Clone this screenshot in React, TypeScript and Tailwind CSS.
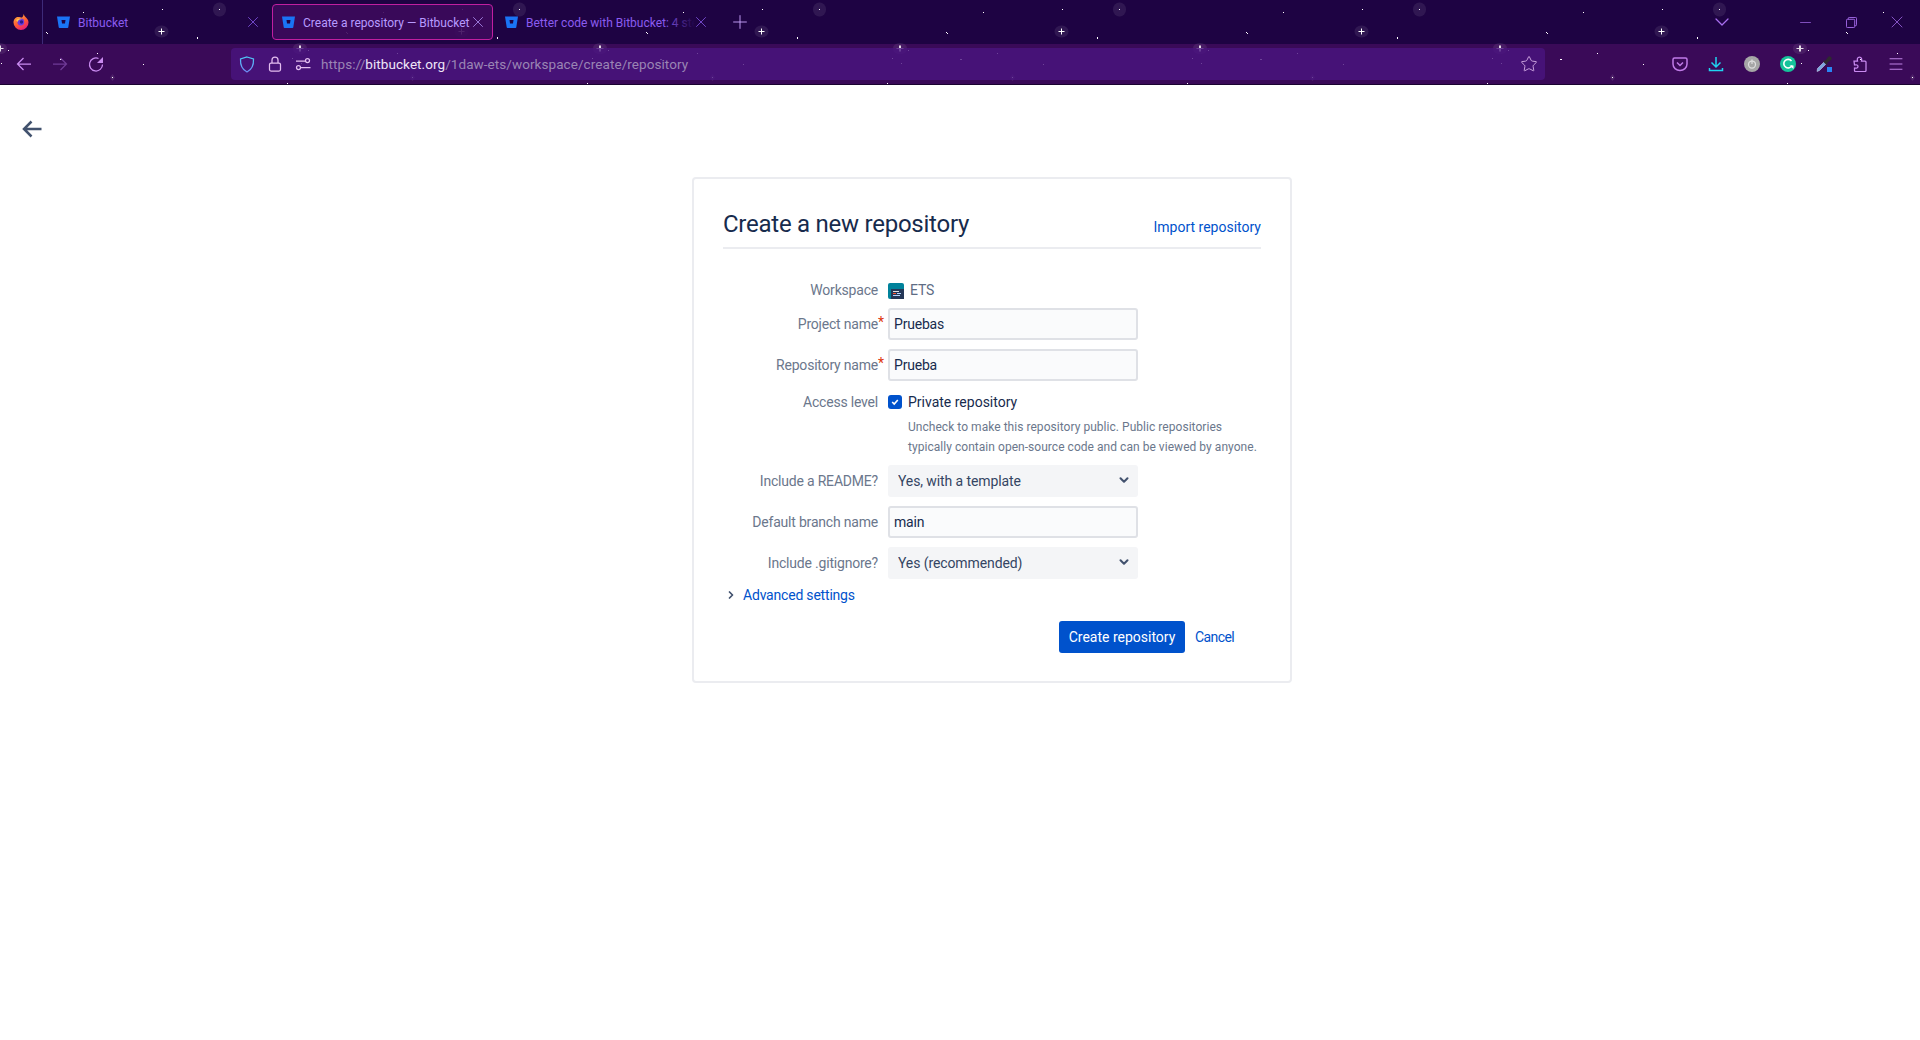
import { ChevronDown, ChevronRight, Menu, Minus, Plus, Star, X } from "lucide-react";

const font = "font-['Roboto','Liberation_Sans',sans-serif]";

function BitbucketIcon() {
  return (
    <svg viewBox="0 0 13 12" className="w-[13px] h-3 shrink-0">
      <path d="M0 0.500h13l-1.700 10.700a.8.8 0 0 1-.8.7H2.500a.8.8 0 0 1-.8-.7z" fill="#1a74f5" />
      <path d="M4.500 4h4l-.5 3.600H5z" fill="#1e0343" />
    </svg>
  );
}

function FirefoxIcon() {
  return (
    <svg viewBox="0 0 16 16" className="w-4 h-4">
      <defs>
        <linearGradient id="ff" x1="0.2" y1="0" x2="0.7" y2="1">
          <stop offset="0" stopColor="#ffb13d" />
          <stop offset="0.55" stopColor="#ff5a35" />
          <stop offset="1" stopColor="#e3187f" />
        </linearGradient>
      </defs>
      <path d="M10.500 0c1 1.500 0.800 2 2 3 1.800 1.500 3 3 3 5.500A7.500 7.500 0 0 1 .5 8.500C.5 5.500 2.500 3 5 3c2 0 3 .5 4 .5 1 -1 1.500-2 1.500-3.500z" fill="url(#ff)" />
      <circle cx="7.800" cy="8" r="3.400" fill="#6a3be0" />
      <circle cx="8.500" cy="8" r="1.700" fill="#2b1a8a" />
      <path d="M3 6c1.500-1.500 4-2 6-1-2 .3-4 1-4.500 3z" fill="#ffc94d" />
    </svg>
  );
}

function Tab({ title, active, fade }: { title: string; active?: boolean; fade?: boolean }) {
  return (
    <div
      className={
        active
          ? "w-[221px] h-9 flex items-center pl-[9px] pr-[5px] rounded border border-[#c01fa0] bg-[#3c0a5c]/90 text-[#b79bff]"
          : "w-[221px] h-9 flex items-center pl-[8px] pr-[6px] border border-transparent text-[#8b5cf0]"
      }
    >
      <BitbucketIcon />
      <div className="relative ml-[8px] mt-[1px] flex-1 overflow-hidden whitespace-nowrap text-[12px] leading-4">
        {title}
        {fade && <div className="absolute right-0 top-0 bottom-0 w-8 bg-gradient-to-r from-transparent to-[#1e0343]" />}
      </div>
      <X size={18} strokeWidth={1} className="shrink-0 -ml-[3px]" />
    </div>
  );
}

function StarField() {
  return (
    <svg className="absolute inset-0 w-full h-full pointer-events-none">
      <defs>
        <pattern id="stars" width="300" height="85" patternUnits="userSpaceOnUse">
          <ellipse cx="161.500" cy="31.500" rx="7" ry="6" fill="#fff" opacity="0.08" />
          <path d="M161.500 28.500v6M158.500 31.500h6" stroke="#fff" strokeWidth="1" />
          <ellipse cx="219.500" cy="9.500" rx="6.500" ry="7" fill="#fff" opacity="0.08" />
          <rect x="219" y="9" width="1" height="1" fill="#fff" />
          <rect x="83" y="12" width="1" height="1" fill="#fff" />
          <rect x="162" y="9" width="1" height="1" fill="#fff" />
          <rect x="46" y="32" width="1" height="1" fill="#fff" />
          <rect x="47" y="33" width="1" height="1" fill="#fff" />
          <rect x="197" y="37" width="1" height="2" fill="#fff" />
          <ellipse cx="0" cy="48.500" rx="7" ry="5.500" fill="#fff" opacity="0.08" />
          <ellipse cx="300" cy="48.500" rx="7" ry="5.500" fill="#fff" opacity="0.08" />
          <path d="M.5 45.500v6M-2.500 48.500h6M299.500 45.500v6M296.500 48.500h6" stroke="#fff" strokeWidth="1" opacity="0.85" />
          <rect x="8" y="50" width="1" height="1" fill="#fff" />
          <rect x="97" y="53" width="1" height="1" fill="#fff" />
          <rect x="292" y="58" width="1" height="1" fill="#fff" />
          <rect x="1" y="63" width="1" height="1" fill="#fff" />
          <rect x="60" y="59" width="2" height="1" fill="#fff" />
          <rect x="143" y="64" width="1" height="1" fill="#fff" />
          <path d="M112.500 74l2.500 3.500-2.500 3.500-2.500-3.500z" fill="#fff" opacity="0.1" />
          <rect x="112" y="77" width="1" height="1" fill="#fff" />
          <rect x="287" y="83" width="1" height="1" fill="#fff" />
        </pattern>
      </defs>
      <rect width="100%" height="100%" fill="url(#stars)" />
    </svg>
  );
}

function BrowserChrome() {
  return (
    <header className={`relative h-[85px] bg-[linear-gradient(#1e0343_0,#1e0343_44px,#3a0a58_44px,#3a0a58_84px,#1a0330_84px)] ${font}`}>
      <StarField />
      <div className="relative h-11 flex items-center">
        <div className="w-[43px] h-11 flex items-center justify-center border-r border-[#3d2a78]">
          <FirefoxIcon />
        </div>
        <div className="ml-[5px] flex gap-[3px]">
          <Tab title="Bitbucket" />
          <Tab title="Create a repository — Bitbucket" active />
          <Tab title="Better code with Bitbucket: 4 steps" fade />
        </div>
        <Plus size={22} strokeWidth={1} className="ml-[12px] text-[#c9a5ff]" />
        <div className="ml-auto flex items-center">
          <ChevronDown size={24} strokeWidth={1.25} className="mr-[48px] text-[#a86ff0]" />
          <div className="w-[46px] flex justify-center"><Minus size={17} strokeWidth={1} className="text-[#a86ff0]" /></div>
          <div className="w-[46px] flex justify-center">
            <svg viewBox="0 0 12 12" className="w-[11px] h-[11px] text-[#a86ff0]" fill="none" stroke="currentColor">
              <rect x="0.500" y="2.500" width="9" height="9" rx="1" />
              <path d="M2.500 2.500v-1a1 1 0 0 1 1-1h7a1 1 0 0 1 1 1v7a1 1 0 0 1-1 1h-1" />
            </svg>
          </div>
          <div className="w-[46px] flex justify-center"><X size={20} strokeWidth={0.9} className="text-[#a86ff0]" /></div>
        </div>
      </div>
      <div className="relative h-10 flex items-center px-[6px]">
        <div className="w-9 flex justify-center">
          <svg viewBox="0 0 16 16" className="w-4 h-4 text-[#c98bf0]" fill="none" stroke="currentColor" strokeWidth="1.25">
            <path d="M15 8H1.500M7.500 2L1.500 8l6 6" />
          </svg>
        </div>
        <div className="w-9 flex justify-center">
          <svg viewBox="0 0 16 16" className="w-4 h-4 text-[#6f3a96]" fill="none" stroke="currentColor" strokeWidth="1.25">
            <path d="M1 8h13.500M8.500 2l6 6-6 6" />
          </svg>
        </div>
        <div className="w-9 flex justify-center">
          <svg viewBox="0 0 16 16" className="w-4 h-4 text-[#c98bf0]" fill="none" stroke="currentColor" strokeWidth="1.25">
            <path d="M14.500 8.500A6.500 6.500 0 1 1 10.500 2.500" />
            <path d="M15 1v6H9z" fill="currentColor" stroke="none" />
          </svg>
        </div>
        <div className="ml-[117px] w-[1314px] h-8 flex items-center rounded bg-[#4a1480]/80 pl-2">
          <svg viewBox="0 0 16 17" className="w-4 h-[17px]" fill="none" strokeWidth="1.25">
            <defs>
              <linearGradient id="shield" x1="0" y1="0" x2="0" y2="1">
                <stop offset="0" stopColor="#4fc8f5" />
                <stop offset="1" stopColor="#6f8cf5" />
              </linearGradient>
            </defs>
            <path d="M8 1l6.500 2c.3 6-1.500 10.500-6.500 13C3 13.500 1.200 9 1.500 3z" stroke="url(#shield)" />
          </svg>
          <svg viewBox="0 0 16 16" className="ml-3 w-4 h-4 text-[#e3bdf0]" fill="none" stroke="currentColor" strokeWidth="1.25">
            <rect x="2.500" y="7" width="11" height="8" rx="1.500" />
            <path d="M5 7V4a3 3 0 0 1 6 0v3" />
          </svg>
          <svg viewBox="0 0 16 16" className="ml-3 w-4 h-4 text-[#e3bdf0]" fill="none" stroke="currentColor" strokeWidth="1.25">
            <path d="M1 5h9M6 11.500h9.500" />
            <circle cx="12.500" cy="4.500" r="2" />
            <circle cx="3.500" cy="11.500" r="2" />
          </svg>
          <div className="ml-[10px] text-[13.5px] leading-5 tracking-[0.07px] text-[#9a85b4] whitespace-nowrap">
            https://<span className="text-[#efe6f8]">bitbucket.org</span>/1daw-ets/workspace/create/repository
          </div>
          <Star size={18} strokeWidth={1.1} className="ml-auto mr-[7px] text-[#e3bdf0]" />
        </div>
        <div className="ml-[117px] flex items-center">
          <div className="w-9 flex justify-center">
            <svg viewBox="0 0 16 16" className="w-4 h-4 text-[#c07be8]" fill="none" stroke="currentColor" strokeWidth="1.5">
              <path d="M2.500 2h11a1.500 1.500 0 0 1 1.500 1.500V8a7 6.500 0 0 1-14 0V3.500A1.500 1.500 0 0 1 2.500 2z" />
              <path d="M5 6.500l3 3 3-3" />
            </svg>
          </div>
          <div className="w-9 flex justify-center">
            <svg viewBox="0 0 16 16" className="w-4 h-4 text-[#1fd4f0]" fill="none" stroke="currentColor" strokeWidth="1.5">
              <path d="M8 1v10M3.500 6.500L8 11l4.500-4.500M1.500 12v2.500h13V12" />
            </svg>
          </div>
          <div className="w-9 flex justify-center">
            <svg viewBox="0 0 16 16" className="w-4 h-4">
              <circle cx="8" cy="8" r="8" fill="#a6a6a6" />
              <circle cx="8" cy="8.500" r="3.500" fill="none" stroke="#dedede" strokeWidth="1.250" />
              <path d="M8 3.500v4.500" stroke="#dedede" strokeWidth="1.250" />
            </svg>
          </div>
          <div className="w-9 flex justify-center">
            <svg viewBox="0 0 16 16" className="w-4 h-4">
              <circle cx="8" cy="8" r="8" fill="#15c39a" />
              <path d="M11.500 5A4.300 4.300 0 1 0 12 9.500" fill="none" stroke="#fff" strokeWidth="1.600" />
              <path d="M9.500 9.500h4v3.500z" fill="#fff" />
            </svg>
          </div>
          <div className="w-9 flex justify-center">
            <svg viewBox="0 0 16 16" className="w-4 h-4">
              <path d="M1 15.500l.5-3L8 6l2 2-6.500 6.500z" fill="#7da7e0" stroke="#d5e3f5" strokeWidth="0.500" />
              <path d="M8 4.500l1.500 0 2.500-3.500a1.500 1.500 0 0 1 3 3l-3.500 2.500 0 1.500-1 1-3.500-3.500z" fill="#2e2a30" />
              <rect x="11" y="11" width="5" height="5" fill="#2a85f5" />
            </svg>
          </div>
          <div className="w-9 flex justify-center">
            <svg viewBox="0 0 16 16" className="w-4 h-4 text-[#c98bf0]" fill="none" stroke="currentColor" strokeWidth="1.25">
              <path d="M2 5h3.500C5 3 5.500 1 7.500 1s2.500 2 2 4h3.500a1 1 0 0 1 1 1v8.500a1 1 0 0 1-1 1H3.500a1 1 0 0 1-1-1V12c2 .5 3.500 0 3.500-1.500S4.500 8.500 2.500 9z" />
            </svg>
          </div>
          <div className="w-9 flex justify-center"><Menu size={18} strokeWidth={1.25} className="text-[#c98bf0]" /></div>
        </div>
      </div>
    </header>
  );
}

function Row({ label, required, children }: { label: string; required?: boolean; children: React.ReactNode }) {
  return (
    <div className="flex items-center">
      <label className="w-[155px] text-right text-[14px] tracking-[-0.2px] text-[#6b778c] whitespace-nowrap relative">
        {label}
        {required && <span className="absolute left-full top-[-2px] text-[#de350b]">*</span>}
      </label>
      <div className="ml-[10px]">{children}</div>
    </div>
  );
}

function TextInput({ value }: { value: string }) {
  return (
    <input
      defaultValue={value}
      className="block w-[250px] h-8 px-1 rounded-[3px] border-2 border-[#dfe1e6] bg-[#fafbfc] text-[14px] tracking-[-0.2px] text-[#172b4d] outline-none"
    />
  );
}

function SelectBox({ value }: { value: string }) {
  return (
    <div className="relative w-[250px] h-8 rounded-[3px] bg-[#f4f5f7]">
      <select
        defaultValue={value}
        className="block w-full h-8 pl-[10px] appearance-none bg-transparent text-[14px] tracking-[-0.1px] text-[#344563] outline-none"
      >
        <option>{value}</option>
      </select>
      <ChevronDown size={14} strokeWidth={3.5} className="absolute right-[7px] top-[8px] text-[#42526e]" />
    </div>
  );
}

export default function App() {
  return (
    <div className="min-h-screen bg-white">
      <BrowserChrome />
      <main className={`flex ${font}`}>
        <aside className="w-16 pt-[34px] pl-[22px]">
          <svg viewBox="0 0 20 20" className="w-5 h-5 text-[#42526e]" fill="none" stroke="currentColor" strokeWidth="2.500">
            <path d="M19.500 10H2M9.500 2.500L2 10l7.500 7.500" />
          </svg>
        </aside>
        <div className="flex-1 flex justify-center pt-[92px]">
          <section className="w-[600px] h-[506px] rounded-[4px] border-2 border-[#ebecf0] px-[29px] pt-[30px]">
            <div className="flex items-end justify-between h-[40px] pb-[7px] border-b-2 border-[#ebecf0]">
              <h1 className="text-[24px] leading-8 tracking-[-0.25px] text-[#172b4d]">Create a new repository</h1>
              <a className="text-[14px] text-[#0052cc] pb-[2px]">Import repository</a>
            </div>
            <div className="mt-[31px] flex flex-col">
              <Row label="Workspace">
                <div className="flex items-center h-5 text-[14px] tracking-[-0.2px] text-[#5e6c84]">
                  <svg viewBox="0 0 16 16" className="w-4 h-4 mr-[6px]">
                    <rect width="16" height="16" rx="2" fill="#00829b" />
                    <rect x="3" y="6" width="13" height="10" fill="#253858" />
                    <rect x="5" y="8" width="6" height="1" fill="#dfe1e6" />
                    <rect x="5" y="10" width="3" height="1" fill="#ff5630" />
                    <rect x="9" y="10" width="4" height="1" fill="#b3d4ff" />
                    <rect x="5" y="12" width="7" height="1" fill="#b3d4ff" />
                  </svg>
                  ETS
                </div>
              </Row>
              <div className="mt-[7px]"><Row label="Project name" required><TextInput value="Pruebas" /></Row></div>
              <div className="mt-[9px]"><Row label="Repository name" required><TextInput value="Prueba" /></Row></div>
              <div className="mt-[11px]">
                <Row label="Access level">
                  <div className="flex items-center h-5">
                    <div className="w-[14px] h-[14px] -mt-[1px] rounded-[3px] bg-[#0052cc] flex items-center justify-center">
                      <svg viewBox="0 0 10 10" className="w-2 h-2" fill="none" stroke="#fff" strokeWidth="2"><path d="M1.500 5l2.500 2.500 4.500-5" /></svg>
                    </div>
                    <span className="ml-[6px] text-[14px] text-[#172b4d]">Private repository</span>
                  </div>
                </Row>
              </div>
              <p className="ml-[185px] mt-[4px] w-[360px] text-[12px] leading-5 tracking-[0.04px] text-[#6b778c]">
                Uncheck to make this repository public. Public repositories
                <br />
                typically contain open-source code and can be viewed by anyone.
              </p>
              <div className="mt-[8px]"><Row label="Include a README?"><SelectBox value="Yes, with a template" /></Row></div>
              <div className="mt-[9px]"><Row label="Default branch name"><TextInput value="main" /></Row></div>
              <div className="mt-[9px]"><Row label="Include .gitignore?"><SelectBox value="Yes (recommended)" /></Row></div>
              <div className="mt-[6px] h-5 flex items-center text-[14px] tracking-[-0.2px] text-[#0052cc]">
                <ChevronRight size={12} strokeWidth={3.5} className="ml-[2px] text-[#42526e]" />
                <span className="ml-[6px]">Advanced settings</span>
              </div>
              <div className="mt-[16px] flex items-center pl-[336px]">
                <button className="w-[126px] h-8 rounded-[3px] bg-[#0052cc] text-[14px] text-white">Create repository</button>
                <a className="ml-[10px] text-[14px] tracking-[-0.6px] text-[#0052cc]">Cancel</a>
              </div>
            </div>
          </section>
        </div>
      </main>
    </div>
  );
}
